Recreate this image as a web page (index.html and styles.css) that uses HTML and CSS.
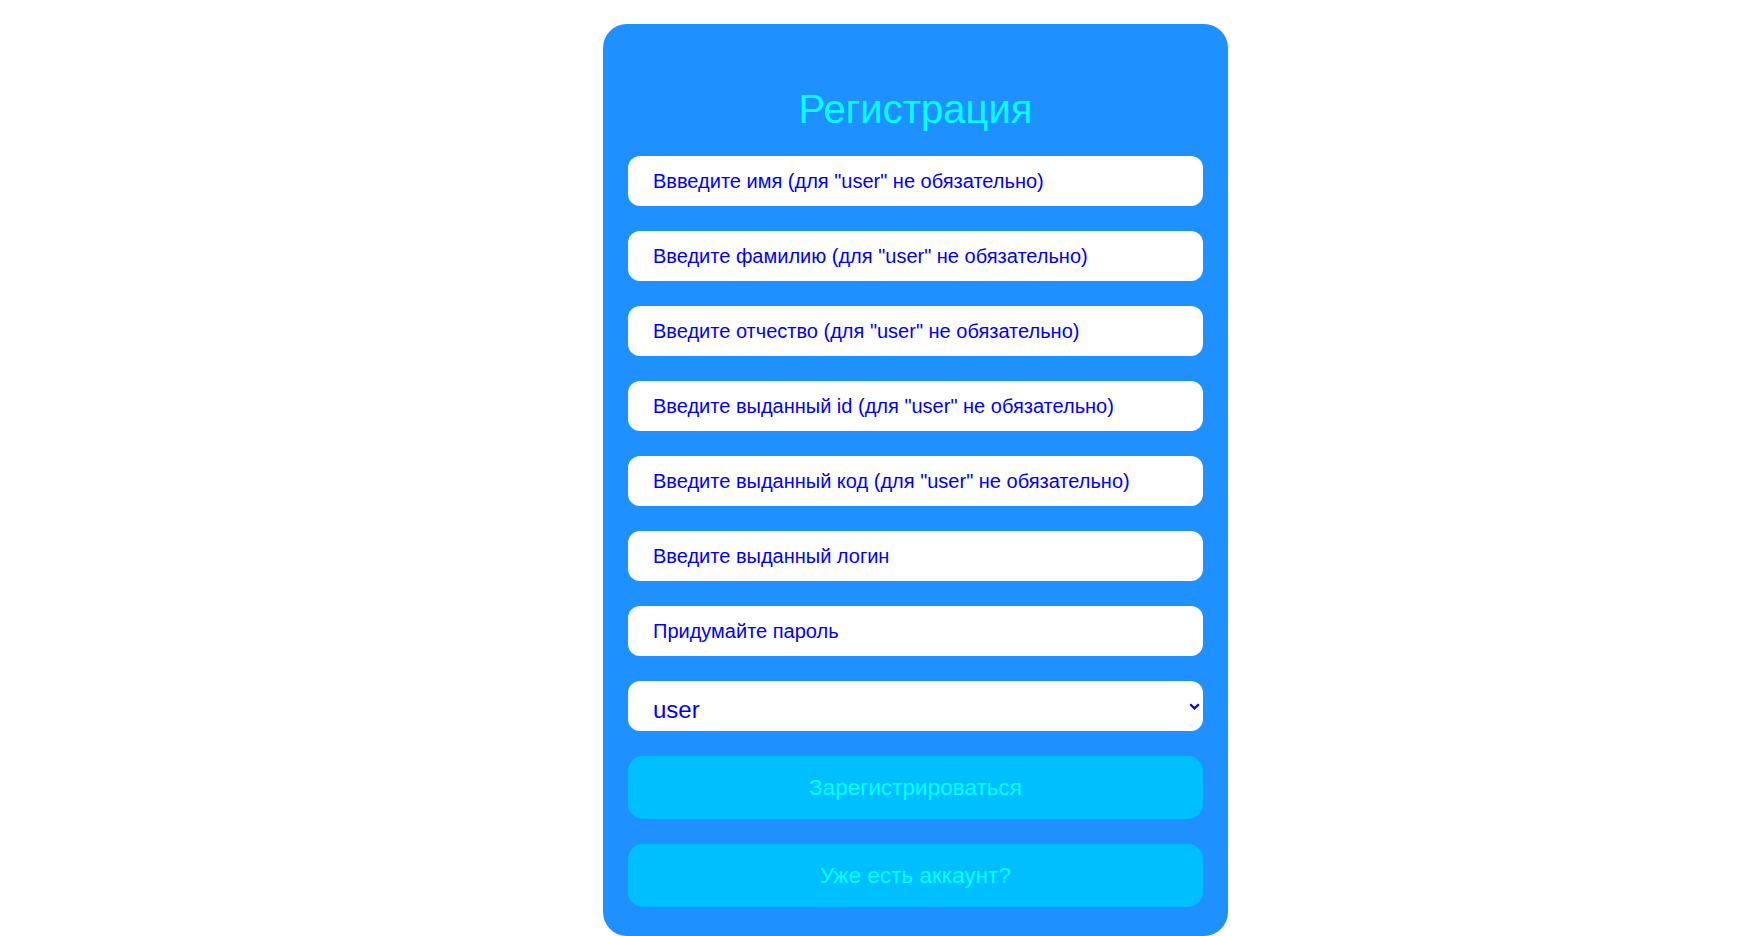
FILE: index.html
```html
<!DOCTYPE html>
<html lang="ru">
<head>
<meta charset="utf-8">
<title>Регистрация</title>
<link rel="stylesheet" href="styles.css">
</head>
<body>
<div class="page">
  <form class="card">
    <h1 class="title">Регистрация</h1>
    <input class="field" type="text" placeholder="Ввведите имя (для &quot;user&quot; не обязательно)">
    <input class="field" type="text" placeholder="Введите фамилию (для &quot;user&quot; не обязательно)">
    <input class="field" type="text" placeholder="Введите отчество (для &quot;user&quot; не обязательно)">
    <input class="field" type="text" placeholder="Введите выданный id (для &quot;user&quot; не обязательно)">
    <input class="field" type="text" placeholder="Введите выданный код (для &quot;user&quot; не обязательно)">
    <input class="field" type="text" placeholder="Введите выданный логин">
    <input class="field" type="password" placeholder="Придумайте пароль">
    <div class="select-wrap">
      <select class="select">
        <option>user</option>
        <option>admin</option>
      </select>
      <svg class="chevron" width="11" height="7" viewBox="0 0 11 7"><path d="M1.2 1.2 L5.5 5.4 L9.8 1.2" fill="none" stroke="#0000ff" stroke-width="2.2"/></svg>
    </div>
    <button class="btn" type="button">Зарегистрироваться</button>
    <button class="btn" type="button">Уже есть аккаунт?</button>
  </form>
</div>
</body>
</html>
```
FILE: styles.css
```css
html, body {
  margin: 0;
  padding: 0;
  background: #ffffff;
}

.page {
  display: flex;
  justify-content: center;
  padding: 24px 0 0 80px;
}

.card {
  width: 625px;
  box-sizing: border-box;
  background: #1e90ff;
  border-radius: 24px;
  padding: 0 25px 29px;
  display: flex;
  flex-direction: column;
  gap: 25px;
  font-family: "Liberation Sans", Arial, sans-serif;
}

.title {
  margin: 0;
  padding-top: 62px;
  margin-bottom: -1px;
  height: 46px;
  line-height: 46px;
  font-size: 40px;
  font-weight: normal;
  color: #00ffff;
  text-align: center;
}

.field {
  display: block;
  width: 100%;
  height: 50px;
  box-sizing: border-box;
  border: none;
  outline: none;
  border-radius: 12px;
  background: #ffffff;
  padding: 0 24px 0 25px;
  font-family: "Liberation Sans", Arial, sans-serif;
  font-size: 20px;
  color: #0000ff;
}

.field::placeholder {
  color: #0000ff;
  opacity: 1;
}

.select-wrap {
  position: relative;
}

.select {
  display: block;
  width: 100%;
  height: 50px;
  box-sizing: border-box;
  border: none;
  outline: none;
  border-radius: 12px;
  background: #ffffff;
  padding: 6px 24px 0 25px;
  font-family: "Liberation Sans", Arial, sans-serif;
  font-size: 24px;
  color: #0000ff;
  appearance: none;
  -webkit-appearance: none;
}

.chevron {
  position: absolute;
  right: 3px;
  top: 22px;
  pointer-events: none;
}

.btn {
  display: block;
  width: 100%;
  height: 63px;
  border: none;
  border-radius: 15px;
  background: #00bfff;
  color: #00ffff;
  font-family: "Liberation Sans", Arial, sans-serif;
  font-size: 22.5px;
  cursor: pointer;
}
```
